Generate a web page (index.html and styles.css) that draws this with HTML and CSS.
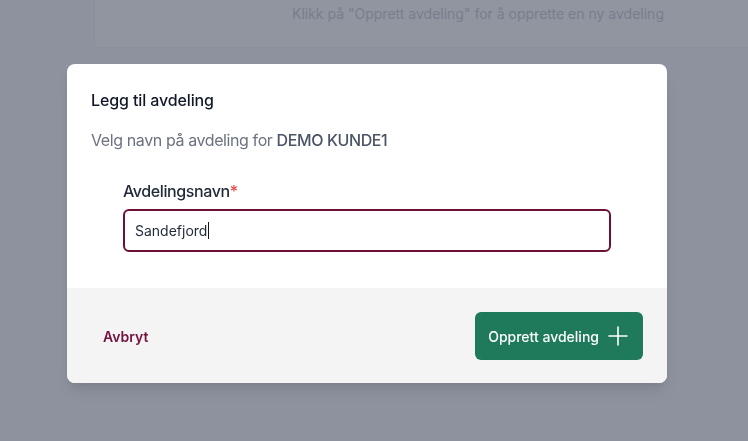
FILE: index.html
```html
<!DOCTYPE html>
<html lang="no">
<head>
<meta charset="utf-8">
<title>Legg til avdeling</title>
<link rel="stylesheet" href="styles.css">
</head>
<body>
<div class="page">
  <div class="card">
    <p class="card-text">Klikk på "Opprett avdeling" for å opprette en ny avdeling</p>
  </div>
</div>
<div class="overlay">
  <div class="modal">
    <div class="modal-body">
      <h3 class="title">Legg til avdeling</h3>
      <p class="subtitle">Velg navn på avdeling for <strong>DEMO KUNDE1</strong></p>
      <div class="form">
        <label class="label">Avdelingsnavn<span class="req">*</span></label>
        <div class="input"><span>Sandefjord</span><span class="caret"></span></div>
      </div>
    </div>
    <div class="modal-footer">
      <button class="btn-cancel">Avbryt</button>
      <button class="btn-primary">
        <span>Opprett avdeling</span>
        <svg width="24" height="24" viewBox="0 0 24 24" fill="none" stroke="#fff" stroke-width="1.6" stroke-linecap="round"><path d="M12 3v18M3 12h18"/></svg>
      </button>
    </div>
  </div>
</div>
</body>
</html>
```
FILE: styles.css
```css
* { box-sizing: border-box; }
html, body { margin: 0; padding: 0; height: 100%; overflow: hidden; }
body {
  font-family: Inter, "Noto Sans", sans-serif;
  background: #f3f4f6;
}
.page {
  padding-left: 94px;
}
.card {
  height: 48px;
  background: #ffffff;
  border-left: 1px solid #e5e7eb;
  border-bottom: 1px solid #e5e7eb;
  padding-left: 197px;
}
.card-text {
  margin: 0;
  padding-top: 4px;
  font-size: 14px;
  line-height: 20px;
  color: #9ca3af;
  white-space: nowrap;
}
.overlay {
  position: fixed;
  inset: 0;
  background: rgba(107, 114, 128, 0.75);
  display: flex;
  align-items: flex-start;
  padding: 64px 0 0 67px;
}
.modal {
  width: 600px;
  background: #fff;
  border-radius: 8px;
  overflow: hidden;
  box-shadow: 0 10px 15px -3px rgba(0,0,0,0.1), 0 4px 6px -4px rgba(0,0,0,0.1);
}
.modal-body {
  padding: 24px 24px 36px;
}
.title {
  margin: 0;
  font-size: 16px;
  line-height: 24px;
  font-weight: 500;
  color: #111827;
  letter-spacing: -0.12px;
}
.subtitle {
  margin: 16px 0 0;
  font-size: 16px;
  line-height: 24px;
  color: #6b7280;
  letter-spacing: -0.4px;
}
.subtitle strong {
  font-weight: 500;
  color: #4b5563;
}
.form {
  padding: 27px 32px 0;
  display: flex;
  flex-direction: column;
  gap: 6px;
}
.label {
  font-size: 16px;
  line-height: 24px;
  font-weight: 500;
  color: #1f2937;
  letter-spacing: -0.4px;
}
.req { color: #ef4444; }
.input {
  height: 43px;
  border: 2px solid #6d1038;
  border-radius: 6px;
  padding: 0 10px;
  display: flex;
  align-items: center;
  font-size: 14px;
  color: #1f2937;
}
.caret {
  display: inline-block;
  width: 1px;
  height: 17px;
  background: #111827;
  margin-left: 1px;
}
.modal-footer {
  background: #f4f4f4;
  padding: 24px 24px 23px;
  display: flex;
  justify-content: space-between;
  align-items: center;
}
.btn-cancel {
  font-family: inherit;
  background: none;
  border: none;
  padding: 12px;
  font-size: 14px;
  font-weight: 600;
  color: #73123f;
}
.btn-primary {
  font-family: inherit;
  height: 48px;
  background: #1e7a5a;
  border: none;
  border-radius: 6px;
  padding: 0 13px 0 13px;
  display: flex;
  align-items: center;
  gap: 7px;
  font-size: 14px;
  font-weight: 500;
  color: #fff;
}
```
